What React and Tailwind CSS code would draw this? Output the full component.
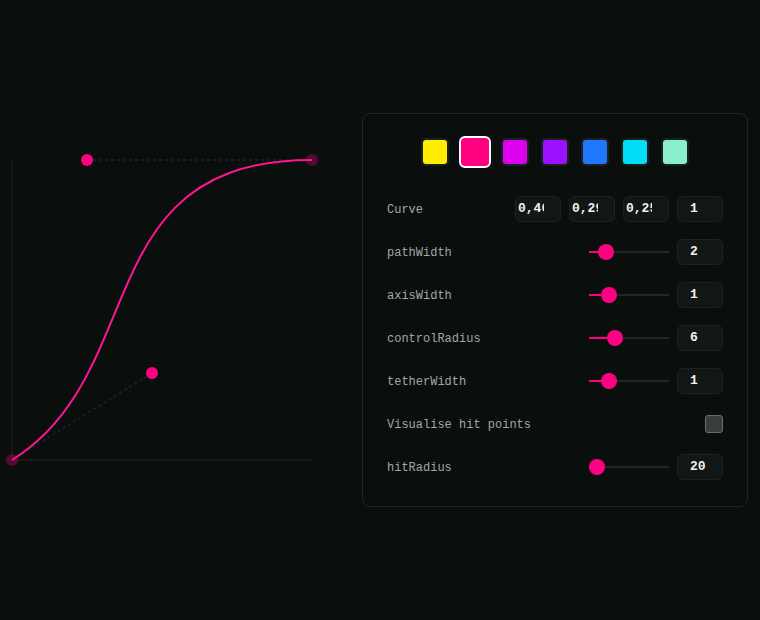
import { useState } from "react";

const swatches = ["#ffee00", "#ff0080", "#dd00ee", "#9911ff", "#2277ff", "#00ddf5", "#88eecc"];

const sliders = [
  { name: "pathWidth", value: "2", pos: 17 },
  { name: "axisWidth", value: "1", pos: 20 },
  { name: "controlRadius", value: "6", pos: 26 },
  { name: "tetherWidth", value: "1", pos: 20 },
];

function Slider({ pos }) {
  return (
    <div className="relative w-[80px] h-4 flex items-center">
      <div className="w-full h-[2px] bg-[#1f2624]" />
      <div className="absolute left-0 top-[7px] h-[2px] bg-[#ff0080]" style={{ width: pos }} />
      <div
        className="absolute top-0 w-4 h-4 rounded-full bg-[#ff0080]"
        style={{ left: pos - 8 }}
      />
    </div>
  );
}

function NumBox({ value, narrow }) {
  return (
    <div
      className={`h-[26px] w-[46px] rounded-md border border-[#1c2321] bg-[#111715] flex items-center text-[13px] font-semibold text-[#f2f2f2] whitespace-nowrap ${
        narrow ? "pl-[2px]" : "pl-3"
      }`}
    >
      <span className={narrow ? "block w-[26px] overflow-hidden" : ""}>{value}</span>
    </div>
  );
}

export default function App() {
  const [selected, setSelected] = useState(1);

  return (
    <div
      className="h-[620px] w-[760px] bg-[#0a0f0e] flex items-center overflow-hidden"
      style={{ fontFamily: '"Liberation Mono", "DejaVu Sans Mono", monospace' }}
    >
      {/* curve preview */}
      <svg width="324" height="324" viewBox="0 0 324 324" className="shrink-0">
        <line x1="12" y1="12" x2="12" y2="312" stroke="#1d2321" strokeWidth="1" />
        <line x1="12" y1="312" x2="312" y2="312" stroke="#1d2321" strokeWidth="1" />
        <line x1="12" y1="312" x2="152" y2="225" stroke="#2a302e" strokeWidth="1" strokeDasharray="3 3" />
        <line x1="312" y1="12" x2="87" y2="12" stroke="#2a302e" strokeWidth="1" strokeDasharray="3 3" />
        <circle cx="12" cy="312" r="6" fill="#ff0080" fillOpacity="0.3" />
        <circle cx="312" cy="12" r="6" fill="#ff0080" fillOpacity="0.3" />
        <path d="M12 312 C152 225 87 12 312 12" fill="none" stroke="#ff1493" strokeWidth="2" />
        <circle cx="152" cy="225" r="6" fill="#ff0080" />
        <circle cx="87" cy="12" r="6" fill="#ff0080" />
      </svg>

      {/* controls panel */}
      <div className="ml-[38px] w-[386px] rounded-lg border border-[#1f2624] bg-[#0a0f0e] px-6 pt-[22px] pb-[26px] flex flex-col">
        <div className="flex items-center justify-center gap-2 h-8">
          {swatches.map((c, i) => (
            <div key={c} className="w-8 h-8 flex items-center justify-center" onClick={() => setSelected(i)}>
              {selected === i ? (
                <div className="w-8 h-8 rounded-md border-2 border-white" style={{ background: c }} />
              ) : (
                <div className="w-7 h-7 rounded-[5px] border-2 border-[#1a201e]" style={{ background: c }} />
              )}
            </div>
          ))}
        </div>

        <div className="mt-7 flex flex-col gap-[17px] text-[12px] text-[#a3a7a5]">
          <div className="h-[26px] flex items-center justify-between">
            <span className="pt-px">Curve</span>
            <div className="flex gap-2">
              <NumBox value="0,46" narrow />
              <NumBox value="0,29" narrow />
              <NumBox value="0,25" narrow />
              <NumBox value="1" />
            </div>
          </div>

          {sliders.map((s) => (
            <div key={s.name} className="h-[26px] flex items-center justify-between">
              <span className="pt-px">{s.name}</span>
              <div className="flex items-center gap-2">
                <Slider pos={s.pos} />
                <NumBox value={s.value} />
              </div>
            </div>
          ))}

          <div className="h-[26px] flex items-center justify-between">
            <span className="pt-px">Visualise hit points</span>
            <div className="w-[18px] h-[18px] rounded-[3px] border border-[#6a6d6c] bg-[#3b3d3c]" />
          </div>

          <div className="h-[26px] flex items-center justify-between">
            <span className="pt-px">hitRadius</span>
            <div className="flex items-center gap-2">
              <Slider pos={8} />
              <NumBox value="20" />
            </div>
          </div>
        </div>
      </div>
    </div>
  );
}
